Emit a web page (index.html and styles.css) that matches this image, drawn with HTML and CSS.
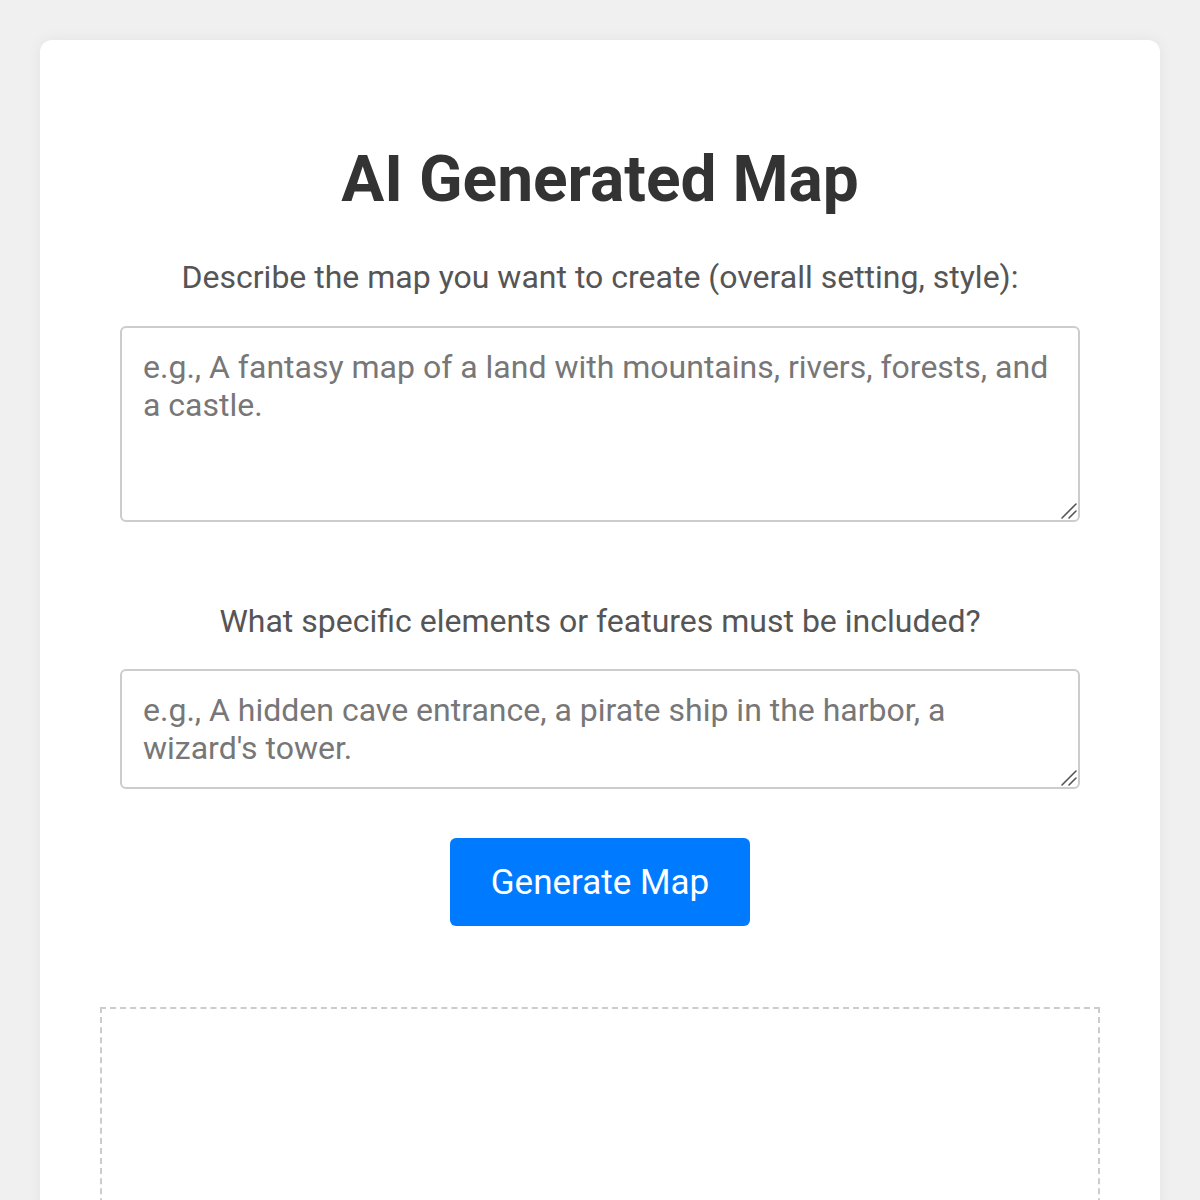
FILE: index.html
```html
<!DOCTYPE html>
<html lang="en">
<head>
<meta charset="utf-8">
<title>AI Generated Map</title>
<link rel="stylesheet" href="styles.css">
</head>
<body>
<main class="card">
  <h1 class="title">AI Generated Map</h1>
  <form class="map-form">
    <label class="field-label" for="setting">Describe the map you want to create (overall setting, style):</label>
    <div class="field-wrap">
      <textarea id="setting" class="field field-large" placeholder="e.g., A fantasy map of a land with mountains, rivers, forests, and a castle."></textarea>
      <svg class="grip" width="20" height="20" viewBox="0 0 20 20" aria-hidden="true"><path d="M4 18 L18 4 M11 18 L18 11" stroke="#555" stroke-width="1.6" stroke-linecap="round" fill="none"/></svg>
    </div>
    <label class="field-label field-label-second" for="features">What specific elements or features must be included?</label>
    <div class="field-wrap field-wrap-second">
      <textarea id="features" class="field field-small" placeholder="e.g., A hidden cave entrance, a pirate ship in the harbor, a wizard's tower."></textarea>
      <svg class="grip" width="20" height="20" viewBox="0 0 20 20" aria-hidden="true"><path d="M4 18 L18 4 M11 18 L18 11" stroke="#555" stroke-width="1.6" stroke-linecap="round" fill="none"/></svg>
    </div>
    <button type="button" class="generate-btn">Generate Map</button>
  </form>
  <section class="map-output"></section>
</main>
</body>
</html>
```
FILE: styles.css
```css
* { box-sizing: border-box; }

html, body {
  margin: 0;
  background: #f0f0f0;
  font-family: Roboto, "Noto Sans", Arial, sans-serif;
}

body {
  padding: 40px 40px 0;
}

.card {
  background: #fff;
  border-radius: 12px;
  box-shadow: 0 0 15px rgba(0, 0, 0, 0.06);
  padding: 60px 60px 40px;
  min-height: 1200px;
  display: flex;
  flex-direction: column;
  align-items: center;
}

.title {
  margin: 40px 0 0;
  font-size: 64px;
  line-height: 80px;
  font-weight: 700;
  color: #333;
  text-align: center;
}

.map-form {
  width: 100%;
  padding: 0 20px;
  display: flex;
  flex-direction: column;
  align-items: center;
}

.field-label {
  margin-top: 36px;
  font-size: 32px;
  line-height: 42px;
  color: #555;
  text-align: center;
}

.field-label-second {
  margin-top: 78px;
}

.field-wrap {
  position: relative;
  width: 100%;
  margin-top: 28px;
}

.field-wrap-second {
  margin-top: 27px;
}

.field {
  display: block;
  width: 100%;
  padding: 20px 21px 18px;
  border: 2px solid #ccc;
  border-radius: 6px;
  font-family: inherit;
  font-size: 32px;
  line-height: 38px;
  color: #333;
  background: #fff;
  resize: none;
}

.field::placeholder {
  color: #777;
}

.field-large { height: 196px; }
.field-small { height: 120px; }

/* resize handle drawn in the corner of each text area */
.grip {
  position: absolute;
  right: 2px;
  bottom: 2px;
  pointer-events: none;
}

.generate-btn {
  margin-top: 49px;
  width: 300px;
  height: 88px;
  border: none;
  border-radius: 6px;
  background: #007bff;
  color: #fff;
  font-family: inherit;
  font-size: 35px;
  cursor: pointer;
}

.map-output {
  width: 100%;
  margin-top: 81px;
  height: 600px;
  border: 2px dashed #ccc;
}
```
